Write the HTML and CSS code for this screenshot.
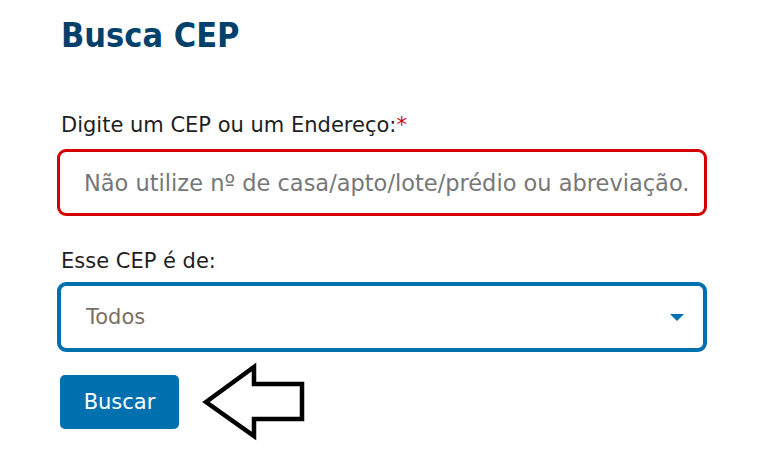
FILE: index.html
```html
<!DOCTYPE html>
<html lang="pt-BR">
<head>
<meta charset="utf-8">
<title>Busca CEP</title>
<link rel="stylesheet" href="styles.css">
</head>
<body>
<main class="page">
  <h1 class="title">Busca CEP</h1>
  <form class="form">
    <label class="label" for="endereco">Digite um CEP ou um Endereço:<span class="req">*</span></label>
    <input class="input" id="endereco" type="text" placeholder="Não utilize nº de casa/apto/lote/prédio ou abreviação.">
    <label class="label label-2" for="tipo">Esse CEP é de:</label>
    <div class="select-wrap">
      <select class="select" id="tipo">
        <option>Todos</option>
      </select>
    </div>
    <div class="actions">
      <button class="btn" type="button">Buscar</button>
      <svg class="arrow" width="110" height="80" viewBox="0 0 110 80" aria-hidden="true">
        <polygon points="6,40 54,5 54,22 102,22 102,57 54,57 54,74" fill="#fff" stroke="#000" stroke-width="4.5" stroke-linejoin="miter"/>
      </svg>
    </div>
  </form>
</main>
</body>
</html>
```
FILE: styles.css
```css
* { box-sizing: border-box; }
html, body { margin: 0; padding: 0; background: #fff; }
body {
  font-family: "DejaVu Sans", Verdana, sans-serif;
  color: #1e1e1e;
}
.page {
  padding: 15px 0 0 57px;
  width: 720px;
}
.title {
  margin: 0;
  font-family: "DejaVu Sans Condensed", "DejaVu Sans", sans-serif;
  font-stretch: condensed;
  font-weight: bold;
  font-size: 34px;
  line-height: 40px;
  color: #00416b;
  padding-left: 4px;
}
.form {
  display: flex;
  flex-direction: column;
  margin-top: 57px;
}
.label {
  font-size: 21px;
  line-height: 26px;
  padding-left: 4px;
  color: #1e1e1e;
}
.req { color: #d40000; }
.input {
  margin-top: 11px;
  width: 650px;
  height: 67px;
  border: 3.5px solid #d40000;
  border-radius: 9px;
  padding: 0 0 0 24px;
  font-family: inherit;
  font-size: 22.5px;
  color: #333;
  outline: none;
}
.input::placeholder { color: #777; opacity: 1; }
.label-2 { margin-top: 32px; }
.select-wrap {
  position: relative;
  margin-top: 8px;
  width: 650px;
}
.select {
  appearance: none;
  -webkit-appearance: none;
  width: 100%;
  height: 70px;
  border: 4px solid #0070af;
  border-radius: 9px;
  background: #fff;
  padding: 0 0 0 25px;
  font-family: inherit;
  font-size: 21px;
  color: #7a6f66;
  outline: none;
}
.select-wrap::after {
  content: "";
  position: absolute;
  right: 23px;
  top: 32px;
  width: 0;
  height: 0;
  border-left: 7px solid transparent;
  border-right: 7px solid transparent;
  border-top: 7px solid #0070af;
}
.actions {
  display: flex;
  align-items: center;
  gap: 21px;
  margin-top: 10px;
  padding-left: 3px;
}
.btn {
  width: 119px;
  height: 54px;
  border: none;
  border-radius: 5px;
  background: #0070af;
  color: #fff;
  font-family: inherit;
  font-size: 21px;
  cursor: pointer;
}
.arrow { display: block; }
```
